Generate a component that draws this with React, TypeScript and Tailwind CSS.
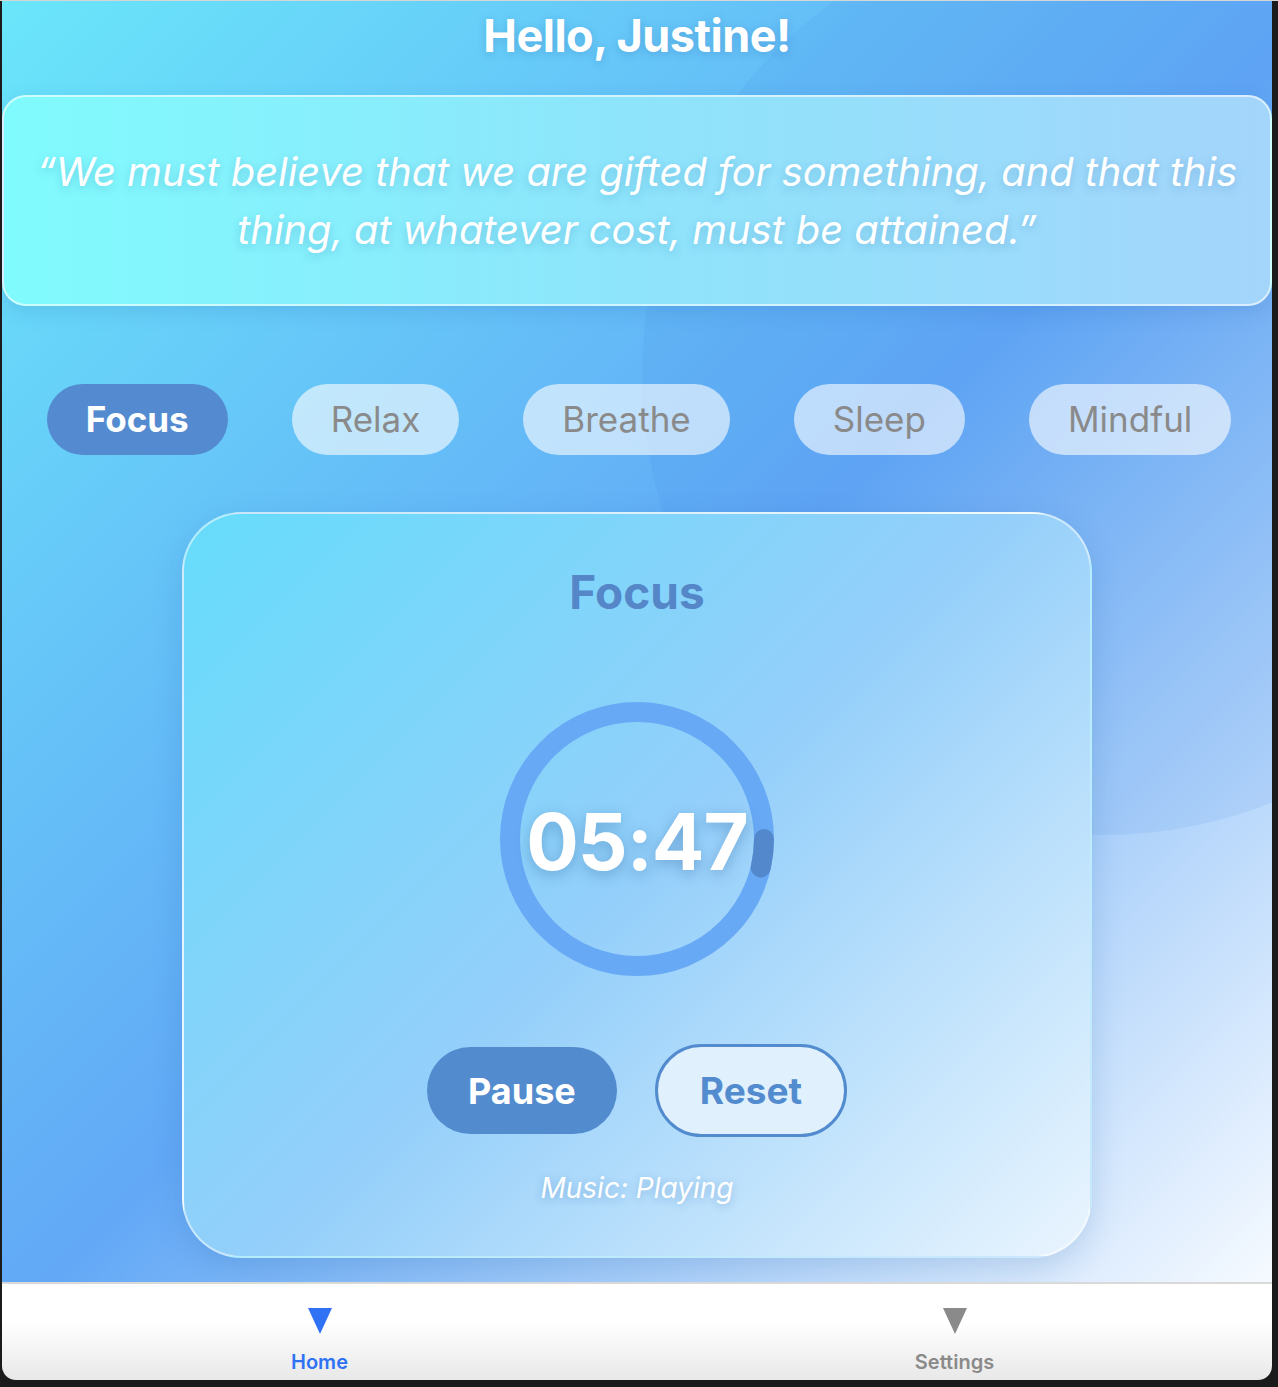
import { useState } from 'react';

const modes = ['Focus', 'Relax', 'Breathe', 'Sleep', 'Mindful'];

const TOTAL = 360;
const REMAINING = 347;

const TimerRing = () => {
  const r = 127;
  const c = 2 * Math.PI * r;
  const done = (TOTAL - REMAINING) / TOTAL;
  return (
    <div className="relative w-[274px] h-[274px] mx-auto">
      <svg width="274" height="274" viewBox="0 0 274 274" className="absolute inset-0">
        <circle cx="137" cy="137" r={r} fill="none" stroke="#68a9f5" strokeWidth="20" />
        <circle
          cx="137"
          cy="137"
          r={r}
          fill="none"
          stroke="#5488cc"
          strokeWidth="20"
          strokeLinecap="round"
          strokeDasharray={`${c * done} ${c}`}
        />
      </svg>
      <div className="absolute inset-0 flex items-center justify-center">
        <span className="text-white font-bold text-[78px] leading-none tracking-[-1px] [text-shadow:0_4px_14px_rgba(40,90,150,0.35)] mt-[6px]">
          05:47
        </span>
      </div>
    </div>
  );
};

const NavItem = ({ label, active }: { label: string; active?: boolean }) => (
  <div className="flex-1 flex flex-col items-center pt-[24px]">
    <svg width="26" height="26" viewBox="0 0 26 26">
      <polygon points="1,0 25,0 13,26" fill={active ? '#2f72f3' : '#8a8a8a'} />
    </svg>
    <span
      className={`mt-[18px] text-[20px] font-semibold leading-none ${
        active ? 'text-[#2f72f3]' : 'text-[#8a8a8a]'
      }`}
    >
      {label}
    </span>
  </div>
);

export default function App() {
  const [mode, setMode] = useState('Focus');
  const [running, setRunning] = useState(true);

  return (
    <div className="min-h-screen bg-[#1b1b1b] border-t border-[#d6d6d6] pl-[2px] font-['Inter',sans-serif]">
      <div className="w-[1270px] h-[1379px] rounded-b-[14px] overflow-hidden flex flex-col">
        {/* Main gradient area */}
        <div className="relative h-[1281px] overflow-hidden bg-[linear-gradient(135deg,#6ae6fa_0%,#62a8f6_52%,#f6faff_100%)]">
          <div className="absolute left-[640px] top-[-86px] w-[920px] h-[920px] rounded-full bg-[#3b7fe6]/10" />

          <div className="relative">
            <header className="h-[94px] flex justify-center pt-[9px]">
              <h1 className="text-white font-bold text-[45px] leading-[52px] tracking-[-0.5px] [text-shadow:0_2px_8px_rgba(30,90,160,0.25)]">
                Hello, Justine!
              </h1>
            </header>

            <div className="h-[211px] rounded-[24px] border-2 border-white/60 bg-[linear-gradient(90deg,#80fbfd_0%,#8ee4fb_50%,#a4d5fb_100%)] shadow-[0_6px_20px_rgba(30,90,160,0.15)] flex items-center justify-center px-[20px]">
              <p className="text-white italic text-[39.8px] leading-[58px] text-center [text-shadow:0_3px_8px_rgba(30,100,160,0.25)]">
                “We must believe that we are gifted for something, and that this thing, at whatever cost, must be attained.”
              </p>
            </div>

            <div className="mt-[78px] pl-[4px] flex justify-center gap-[64px]">
              {modes.map((m) => (
                <button
                  key={m}
                  onClick={() => setMode(m)}
                  className={`h-[71px] px-[39px] rounded-full text-[35px] ${
                    mode === m
                      ? 'bg-[#548bd0] text-white font-bold'
                      : 'bg-white/60 text-[#8a8a8a] font-normal'
                  }`}
                >
                  {m}
                </button>
              ))}
            </div>

            <div className="mt-[57px] mx-auto w-[910px] h-[746px] rounded-[60px] border-2 border-white/50 bg-[linear-gradient(135deg,#66dcfb_0%,#94cffa_50%,#eaf5fe_100%)] shadow-[0_10px_30px_rgba(30,90,160,0.18)] flex flex-col items-center">
              <h2 className="mt-[52px] text-[46px] leading-[53px] font-bold text-[#5486c8]">{mode}</h2>
              <div className="mt-[83px]">
                <TimerRing />
              </div>
              <div className="mt-[68px] flex items-center gap-[38px]">
                <button
                  onClick={() => setRunning(!running)}
                  className="h-[87px] px-[41px] rounded-full bg-[#538bcf] text-white font-bold text-[36px]"
                >
                  {running ? 'Pause' : 'Start'}
                </button>
                <button className="h-[93px] px-[42px] rounded-full bg-[#e0f1fd] border-[3px] border-[#538bcf] text-[#538bcf] font-bold text-[37px]">
                  Reset
                </button>
              </div>
              <p className="mt-[30px] text-white italic text-[28px] leading-[42px] [text-shadow:0_2px_8px_rgba(30,90,160,0.3)]">
                Music: {running ? 'Playing' : 'Paused'}
              </p>
            </div>
          </div>
        </div>

        {/* Bottom nav */}
        <nav className="flex-1 flex border-t-2 border-[#d9d9d9] bg-[linear-gradient(180deg,#ffffff_40%,#e8e8e8_100%)]">
          <NavItem label="Home" active />
          <NavItem label="Settings" />
        </nav>
      </div>
    </div>
  );
}
